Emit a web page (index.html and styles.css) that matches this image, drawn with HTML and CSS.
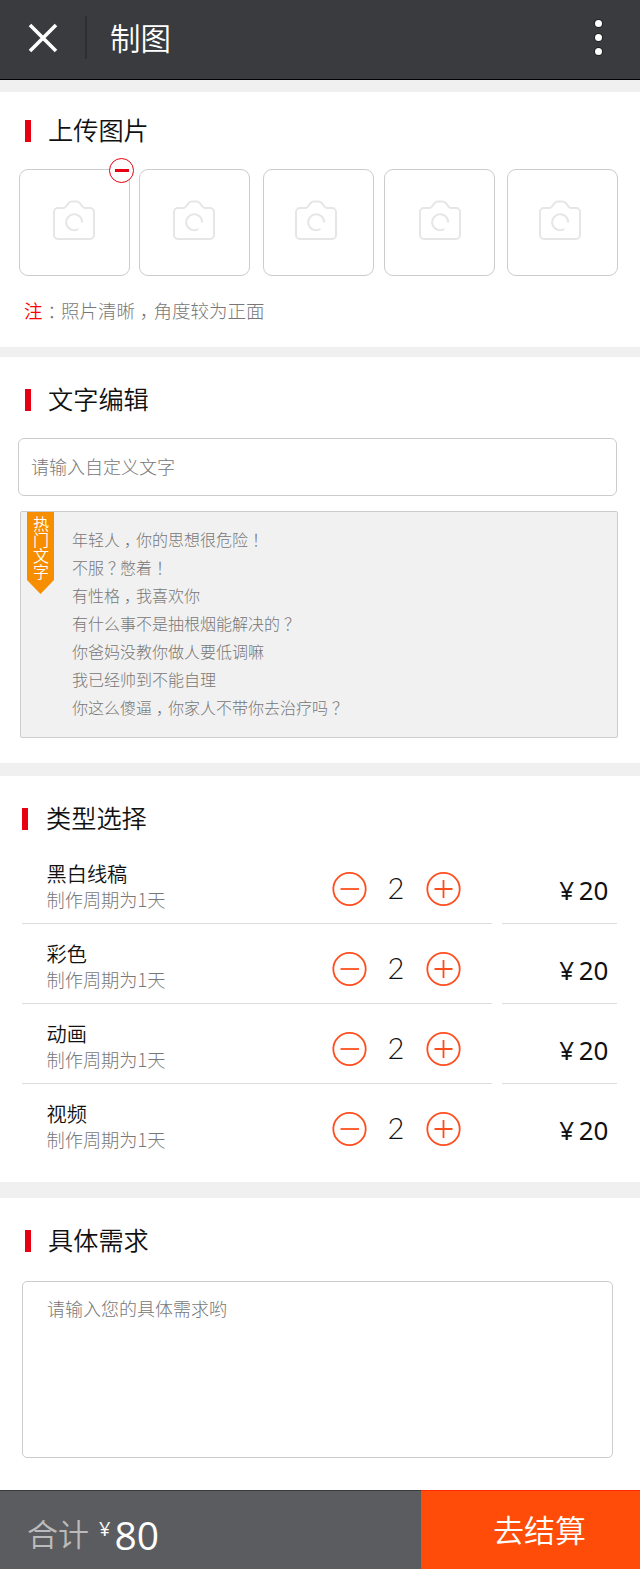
FILE: index.html
```html
<!DOCTYPE html>
<html lang="zh-CN">

<head>
    <meta charset="UTF-8">
    <title>制图</title>
    <link rel="stylesheet" href="styles.css">
</head>

<body>
    <svg class="sprite">
        <symbol id="camera" viewBox="0 0 42 40">
            <path d="M5 8h5.500c1 0 1.500-.4 2.200-1.100l3-3.900c1-1.100 1.700-1.600 3-1.600h5c1.300 0 2 .5 3 1.600l3 3.900c.7.700 1.200 1.100 2.200 1.100H37a4 4 0 0 1 4 4V35a4 4 0 0 1-4 4H5a4 4 0 0 1-4-4V12a4 4 0 0 1 4-4z" />
            <path d="M29.200 22.500A8 8 0 1 0 25.500 29" />
        </symbol>
        <symbol id="minus" viewBox="0 0 36 36">
            <circle cx="18.500" cy="18" r="16.200" />
            <path d="M9.500 18h18.500" />
        </symbol>
        <symbol id="plus" viewBox="0 0 36 36">
            <circle cx="18.500" cy="18" r="16.200" />
            <path d="M9.500 18h18M18.500 9v18" />
        </symbol>
    </svg>

    <header class="header">
        <svg class="close" viewBox="0 0 30 30">
            <path d="M2 2l26 26M28 2L2 28" />
        </svg>
        <div class="line"></div>
        <h1>制图</h1>
        <div class="more"><i></i><i></i><i></i></div>
    </header>

    <section class="upload">
        <h2>上传图片</h2>
        <div class="photos">
            <div class="photo">
                <svg><use href="#camera" /></svg>
                <span class="remove"></span>
            </div>
            <div class="photo"><svg><use href="#camera" /></svg></div>
            <div class="photo"><svg><use href="#camera" /></svg></div>
            <div class="photo"><svg><use href="#camera" /></svg></div>
            <div class="photo"><svg><use href="#camera" /></svg></div>
        </div>
        <p class="note"><em>注</em><b>：</b>照片清晰<b>，</b>角度较为正面</p>
    </section>

    <section class="edit">
        <h2>文字编辑</h2>
        <div class="input">请输入自定义文字</div>
        <div class="hot">
            <div class="ribbon">热门文字</div>
            <ul>
                <li>年轻人<b>，</b>你的思想很危险<b>！</b></li>
                <li>不服<b>？</b>憋着<b>！</b></li>
                <li>有性格<b>，</b>我喜欢你</li>
                <li>有什么事不是抽根烟能解决的<b>？</b></li>
                <li>你爸妈没教你做人要低调嘛</li>
                <li>我已经帅到不能自理</li>
                <li>你这么傻逼<b>，</b>你家人不带你去治疗吗<b>？</b></li>
            </ul>
        </div>
    </section>

    <section class="types">
        <h2>类型选择</h2>
        <div class="row">
            <div class="item">
                <div class="info"><h3>黑白线稿</h3><p>制作周期为1天</p></div>
                <div class="count">
                    <svg><use href="#minus" /></svg><span>2</span><svg><use href="#plus" /></svg>
                </div>
            </div>
            <div class="price"><span>¥</span>20</div>
        </div>
        <div class="row">
            <div class="item">
                <div class="info"><h3>彩色</h3><p>制作周期为1天</p></div>
                <div class="count">
                    <svg><use href="#minus" /></svg><span>2</span><svg><use href="#plus" /></svg>
                </div>
            </div>
            <div class="price"><span>¥</span>20</div>
        </div>
        <div class="row">
            <div class="item">
                <div class="info"><h3>动画</h3><p>制作周期为1天</p></div>
                <div class="count">
                    <svg><use href="#minus" /></svg><span>2</span><svg><use href="#plus" /></svg>
                </div>
            </div>
            <div class="price"><span>¥</span>20</div>
        </div>
        <div class="row">
            <div class="item">
                <div class="info"><h3>视频</h3><p>制作周期为1天</p></div>
                <div class="count">
                    <svg><use href="#minus" /></svg><span>2</span><svg><use href="#plus" /></svg>
                </div>
            </div>
            <div class="price"><span>¥</span>20</div>
        </div>
    </section>

    <section class="demand">
        <h2>具体需求</h2>
        <div class="textarea">请输入您的具体需求哟</div>
    </section>

    <footer class="footer">
        <div class="total">
            <span class="label">合计</span>
            <span class="yen">¥</span>
            <span class="sum">80</span>
        </div>
        <div class="pay">去结算</div>
    </footer>
</body>

</html>
```
FILE: styles.css
```css
* {
    margin: 0;
    padding: 0;
    box-sizing: border-box;
}

body {
    width: 640px;
    background: #f0f0f0;
    font-family: "Noto Sans CJK SC", sans-serif;
    font-weight: 300;
    color: #111;
}

.sprite {
    display: none;
}

svg {
    display: block;
    fill: none;
}

/* punctuation sits in the middle of its cell */
b {
    display: inline-block;
    width: 1em;
    text-indent: 0.25em;
    white-space: nowrap;
    font-weight: 300;
}

/* header */
.header {
    display: flex;
    align-items: center;
    height: 80px;
    padding: 0 38px 4px 28px;
    background: #3a3b3f;
    border-bottom: 1px solid #000;
    color: #fff;
}

.close {
    width: 30px;
    height: 30px;
    stroke: #fff;
    stroke-width: 3.6;
}

.line {
    width: 2px;
    height: 43px;
    margin: 0 23px 0 27px;
    background: #2d2e32;
}

.header h1 {
    flex: 1;
    padding-bottom: 2px;
    font-size: 30.5px;
    line-height: 44px;
    font-weight: 350;
}

.more {
    display: flex;
    flex-direction: column;
    gap: 7px;
}

.more i {
    width: 7px;
    height: 7px;
    border-radius: 50%;
    background: #fff;
    box-shadow: 0 0 0 1px #222327;
}

/* sections */
section {
    background: #fff;
}

h2 {
    display: flex;
    align-items: flex-start;
    height: 22px;
    font-size: 25.2px;
    font-weight: 350;
    line-height: 18px;
}

h2::before {
    content: "";
    width: 6px;
    height: 22px;
    margin-right: 17px;
    background: #e60012;
}

.upload {
    height: 255px;
    margin: 12px 0 10px;
    padding: 28px 22px 0 19px;
}

.upload h2,
.edit h2 {
    padding-left: 6px;
}

.photos {
    display: flex;
    margin-top: 27px;
}

.photo {
    position: relative;
    width: 111px;
    height: 107px;
    padding: 30px 0 0 33px;
    border: 1px solid #ccc;
    border-radius: 9px;
}

.photo:nth-child(2) {
    margin: 0 13px 0 9px;
}

.photo:nth-child(4) {
    margin: 0 12px 0 10px;
    padding-left: 34px;
}

.photo:nth-child(3),
.photo:nth-child(5) {
    padding-left: 31px;
}

.photo svg {
    width: 42px;
    height: 40px;
    stroke: #e6e6e6;
    stroke-width: 2;
}

.remove {
    position: absolute;
    top: -12px;
    right: -5px;
    display: flex;
    align-items: center;
    justify-content: center;
    width: 25px;
    height: 25px;
    border: 1px solid #e60012;
    border-radius: 50%;
    background: #fff;
}

.remove::before {
    content: "";
    width: 14px;
    height: 3px;
    background: #e60012;
}

.note {
    margin: 20px 0 0 5px;
    font-size: 18.5px;
    line-height: 28px;
    color: #777;
}

.note em {
    font-style: normal;
    font-weight: 350;
    color: #f00;
}

.edit {
    height: 406px;
    padding: 32px 22px 0 19px;
}

.input {
    width: 599px;
    height: 58px;
    margin: 27px 0 15px -1px;
    padding-left: 12px;
    border: 1px solid #ccc;
    border-radius: 6px;
    font-size: 18px;
    line-height: 55px;
    color: #777;
}

.hot {
    display: flex;
    align-items: flex-start;
    width: 598px;
    height: 227px;
    margin-left: 1px;
    padding-left: 6px;
    border: 1px solid #ccc;
    border-radius: 2px;
    background: #f1f1f1;
}

.ribbon {
    width: 27px;
    height: 82px;
    padding: 3px 5px 0 6px;
    background: #f68e00;
    clip-path: polygon(0 0, 100% 0, 100% 68px, 50% 100%, 0 68px);
    font-size: 16px;
    font-weight: 350;
    line-height: 16px;
    color: #fff;
}

.hot ul {
    margin: 13px 0 0 18px;
    list-style: none;
    font-size: 16px;
    line-height: 28px;
    white-space: nowrap;
    color: #777;
}

.types {
    height: 406px;
    margin: 13px 0 16px;
    padding: 32px 23px 0 22px;
}

.types h2::before {
    margin-right: 18px;
}

.types h2 {
    margin-bottom: 14px;
}

.row {
    display: flex;
    justify-content: space-between;
    height: 80px;
}

.item {
    display: flex;
    justify-content: space-between;
    width: 470px;
    padding: 0 31px 0 24.5px;
    border-bottom: 1px solid #ddd;
}

.info {
    padding-top: 17px;
}

.info h3 {
    font-size: 20.2px;
    font-weight: 350;
    line-height: 26px;
}

.info p {
    font-size: 18.2px;
    line-height: 25px;
    color: #777;
}

.count {
    display: flex;
    align-items: center;
    padding-top: 10px;
}

.count svg {
    width: 36px;
    height: 36px;
    stroke: #ff4e1d;
    stroke-width: 1.8;
}

.count span {
    width: 58px;
    padding-bottom: 2px;
    text-align: center;
    font-family: Lato, sans-serif;
    font-weight: 300;
    font-size: 29px;
    line-height: 36px;
}

.price {
    width: 115px;
    padding: 28px 9px 0 0;
    border-bottom: 1px solid #ddd;
    text-align: right;
    font-family: "Noto Sans", sans-serif;
    font-weight: 400;
    font-size: 26px;
    line-height: 36px;
    letter-spacing: -0.3px;
}

.price span {
    margin-right: 5px;
}

.row:last-child .item,
.row:last-child .price {
    border-color: transparent;
}

.demand {
    height: 292px;
    padding: 32px 27px 0 22px;
}

.demand h2 {
    padding-left: 3px;
}

.textarea {
    height: 177px;
    margin-top: 29px;
    padding: 12px 24px;
    border: 1px solid #ccc;
    border-radius: 5px;
    font-size: 18px;
    line-height: 28px;
    color: #777;
}

/* footer */
.footer {
    display: flex;
    height: 79px;
    color: #fff;
}

.total {
    display: flex;
    width: 421px;
    padding-left: 27px;
    background: #5b5c60;
    border-top: 1px solid #3a3b3f;
    font-family: "Open Sans", sans-serif;
    font-weight: 400;
}

.label {
    padding-top: 19px;
    font-family: "Noto Sans CJK SC", sans-serif;
    font-size: 31px;
    font-weight: 350;
    line-height: 46px;
    color: #bbb;
}

.yen {
    margin-left: 10px;
    padding-top: 24px;
    font-size: 20px;
    line-height: 28px;
}

.sum {
    margin-left: 4px;
    padding-top: 19px;
    font-size: 39px;
    line-height: 50px;
}

.pay {
    flex: 1;
    padding: 15px 0 0 72px;
    background: #ff4c08;
    border-top: 1px solid #ff2a00;
    font-size: 31px;
    font-weight: 350;
    line-height: 46px;
}
```
